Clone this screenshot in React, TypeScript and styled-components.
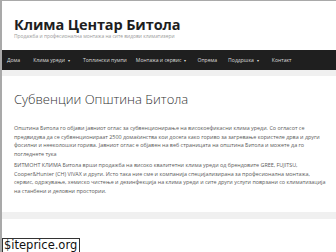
import React from "react";
import styled, { createGlobalStyle } from "styled-components";

const Global = createGlobalStyle`
  html, body { margin: 0; padding: 0; background: #ffffff; }
  body { font-family: "Open Sans", "Liberation Sans", sans-serif; overflow: hidden; }
`;

const Frame = styled.div`
  width: 336px;
  height: 252px;
  box-sizing: border-box;
  border-top: 1px solid #a9a9a9;
  border-left: 2px solid #a9a9a9;
  background: #ffffff;
  position: relative;
  overflow: hidden;
`;

const Header = styled.header`
  height: 49px;
  box-sizing: border-box;
  padding: 15px 0 0 12px;
  background: #ffffff;
`;

const Title = styled.h1`
  margin: 0;
  font-size: 14.5px;
  line-height: 17px;
  font-weight: 700;
  color: #1e1e1e;
  letter-spacing: -0.1px;
`;

const Tagline = styled.div`
  margin-top: 0;
  font-size: 4.9px;
  line-height: 6px;
  color: #9a9a9a;
`;

const Nav = styled.nav`
  height: 20px;
  background: #1f1f1f;
  display: flex;
  align-items: center;
  padding-left: 5px;
`;

const NavItem = styled.span<{ $gap: number }>`
  font-size: 5.1px;
  color: #dcdcdc;
  margin-right: ${(p) => p.$gap}px;
  white-space: nowrap;
`;

const Caret = styled.span`
  margin-left: 3px;
  font-size: 4px;
`;

const Body = styled.div`
  background: #f0f0f0;
  padding: 6px 0 7px;
`;

const Card = styled.article`
  background: #ffffff;
  padding: 16px 9px 17px 12px;
`;

const Heading = styled.h2`
  margin: 0 0 17px;
  font-size: 13px;
  line-height: 15px;
  font-weight: 300;
  color: #333333;
`;

const Para = styled.p`
  margin: 0 0 3px;
  font-size: 5.4px;
  line-height: 8.5px;
  color: #5a5a5a;
  &:last-child { margin-bottom: 0; }
`;

const Watermark = styled.div`
  position: absolute;
  left: 0;
  bottom: 0;
  padding: 0 2px 0 1px;
  border: 1px solid #333;
  border-bottom: none;
  background: #ffffff;
  font-family: "DejaVu Sans", sans-serif;
  font-size: 11.5px;
  line-height: 13px;
  color: #111;
`;

const navItems: { label: string; caret?: boolean; gap: number }[] = [
  { label: "Дома", gap: 13 },
  { label: "Клима уреди", caret: true, gap: 13 },
  { label: "Топлински пумпи", gap: 9 },
  { label: "Монтажа и сервис", caret: true, gap: 11 },
  { label: "Опрема", gap: 11 },
  { label: "Поддршка", caret: true, gap: 13 },
  { label: "Контакт", gap: 0 },
];

export default function App() {
  return (
    <>
      <Global />
      <Frame>
        <Header>
          <Title>Клима Центар Битола</Title>
          <Tagline>Продажба и професионална монтажа на сите видови климатизери</Tagline>
        </Header>
        <Nav>
          {navItems.map((n) => (
            <NavItem key={n.label} $gap={n.gap}>
              {n.label}
              {n.caret && <Caret>▾</Caret>}
            </NavItem>
          ))}
        </Nav>
        <Body>
          <Card>
            <Heading>Субвенции Општина Битола</Heading>
            <Para>
              Општина Битола го објави јавниот оглас за субвенционирање на високоефикасни клима уреди. Со огласот се
              предвидува да се субвенционираат 2500 домаќинства кои досега како гориво за загревање користеле дрва и други
              фосилни и нееколошки горива. Јавниот оглас е објавен на веб страницата на општина Битола и можете да го
              погледнете тука
            </Para>
            <Para>
              БИТМОНТ КЛИМА Битола врши продажба на високо квалитетни клима уреди од брендовите GREE, FUJITSU,
              Cooper&amp;Hunter (CH) VIVAX и други. Исто така ние сме и компанија специјализирана за професионална монтажа,
              сервис, одржување, хемиско чистење и дезинфекција на клима уреди и сите други услуги поврзани со климатизација
              на станбени и деловни простории.
            </Para>
          </Card>
        </Body>
        <Watermark>$iteprice.org</Watermark>
      </Frame>
    </>
  );
}
